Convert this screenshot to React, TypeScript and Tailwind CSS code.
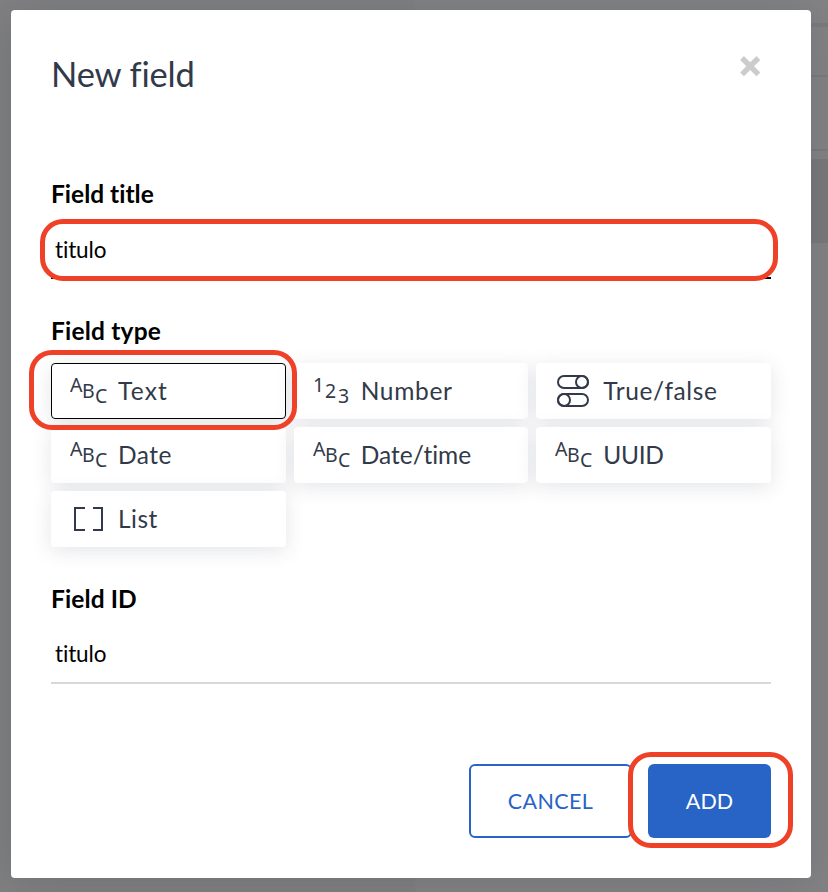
import type { ReactNode } from "react";

function Highlight({ className }: { className: string }) {
  return <div className={`pointer-events-none absolute z-10 border-[5px] border-[#ee4127] ${className}`} />;
}

function LetterIcon({ chars }: { chars: string }) {
  return (
    <span className="-mt-[2px] ml-px flex h-[32px] w-[38px] font-['Noto_Sans'] text-[20.5px] leading-[20px]">
      <span className="w-[12px] origin-left scale-x-[.95]">{chars[0]}</span>
      <span className="mt-[6px] w-[13px] origin-left scale-x-[.95]">{chars[1]}</span>
      <span className="mt-[11px] w-[12px] origin-left scale-x-[.95]">{chars[2]}</span>
    </span>
  );
}

function ToggleIcon() {
  return (
    <svg width="38" height="34" viewBox="0 0 38 34" fill="none" stroke="#323a49" strokeWidth="2" className="-mt-px">
      <rect x="4" y="2" width="30" height="12" rx="6" />
      <circle cx="28" cy="8" r="6" />
      <rect x="4" y="20" width="30" height="12" rx="6" />
      <circle cx="10" cy="26" r="6" />
    </svg>
  );
}

function BracketIcon() {
  return (
    <svg width="36" height="30" viewBox="0 0 36 30" fill="none" stroke="#323a49" strokeWidth="2">
      <path d="M16 4H6V26H16M24 4H33V26H24" />
    </svg>
  );
}

function Option({ icon, label, tracking, selected }: { icon: ReactNode; label: string; tracking: string; selected?: boolean }) {
  return (
    <div className={`relative flex h-14 items-center rounded bg-white pl-[18px] shadow-[0_4px_20px_rgba(45,55,80,0.13)] ${selected ? "outline outline-1 -outline-offset-1 outline-black" : ""}`}>
      <div className="flex w-[49px] shrink-0">{icon}</div>
      <span className={`text-[24.5px] leading-8 ${tracking}`}>{label}</span>
    </div>
  );
}

export default function App() {
  return (
    <div className="relative flex h-[892px] w-[828px] overflow-hidden bg-[#838385] pl-[11px] pt-[10px] font-['Lato',sans-serif] text-[#323a49] [font-variant-ligatures:none]">
      <div className="absolute left-0 top-0 h-full w-[415px] bg-[#808082]" />
      <div className="absolute right-0 top-[23px] h-[4px] w-[17px] bg-[#7b7b7d]" />
      <div className="absolute right-0 top-[75px] h-[2px] w-[17px] bg-[#7b7b7d]" />
      <div className="absolute right-0 top-[149px] h-[2px] w-[17px] bg-[#7b7b7d]" />
      <div className="absolute right-0 top-[159px] h-[84px] w-[17px] bg-[#79797b]" />

      <div className="relative h-[868px] w-[800px] rounded-[4px] bg-white px-10 shadow-[0_4px_40px_rgba(45,55,60,0.2)]">
        <div className="flex h-[164px] justify-between pt-[42px]">
          <h1 className="text-[34.5px] leading-[44px] tracking-[-0.15px]">New field</h1>
          <svg width="22" height="22" viewBox="0 0 22 22" className="mr-[10px] mt-[3px]" stroke="#cccccc" strokeWidth="5.4">
            <path d="M3 3L19.4 19.4M19.4 3L3 19.4" />
          </svg>
        </div>

        <label className="block h-[41px] pt-[4px] text-[24.5px] font-bold leading-8 tracking-[0px] text-black">Field title</label>
        <div className="relative h-[64px] border-b-2 border-black">
          <div className="pl-1 pt-[20px] text-[22.5px] leading-[30px] tracking-[-0.15px] text-black">titulo</div>
          <Highlight className="-left-[11px] -right-[7px] top-[4px] h-[62px] rounded-[23px]" />
        </div>

        <label className="block h-[84px] pt-[36px] text-[24.5px] font-bold leading-8 tracking-[0.2px] text-black">Field type</label>
        <div className="relative grid grid-cols-3 gap-2">
          <Option icon={<LetterIcon chars="ABC" />} label="Text" tracking="tracking-[1.2px]" selected />
          <Option icon={<LetterIcon chars="123" />} label="Number" tracking="tracking-[0.7px]" />
          <Option icon={<ToggleIcon />} label="True/false" tracking="tracking-[0.6px]" />
          <Option icon={<LetterIcon chars="ABC" />} label="Date" tracking="tracking-[0.5px]" />
          <Option icon={<LetterIcon chars="ABC" />} label="Date/time" tracking="tracking-[0px]" />
          <Option icon={<LetterIcon chars="ABC" />} label="UUID" tracking="tracking-[-0.3px]" />
          <Option icon={<BracketIcon />} label="List" tracking="tracking-[0.5px]" />
          <Highlight className="-left-[22px] -top-[13px] h-[80px] w-[268px] rounded-[23px]" />
        </div>

        <label className="block h-[72px] pt-[36px] text-[24.5px] font-bold leading-8 tracking-[0.1px] text-black">Field ID</label>
        <div className="h-[65px] border-b-2 border-[#d8d8dc] pl-1 pt-[20px] text-[22.5px] leading-[30px] tracking-[-0.15px] text-black">titulo</div>

        <div className="mt-20 flex h-[74px] justify-end gap-4 text-[21.5px]">
          <button className="w-[163px] rounded-[6px] border-2 border-[#2764c5] pt-px tracking-[0.4px] text-[#2764c5]">CANCEL</button>
          <div className="relative">
            <button className="h-full w-[123px] rounded-[6px] bg-[#2764c5] pt-px text-white">ADD</button>
            <Highlight className="-left-[20px] -top-[12px] h-[96px] w-[165px] rounded-[23px]" />
          </div>
        </div>
      </div>
    </div>
  );
}
